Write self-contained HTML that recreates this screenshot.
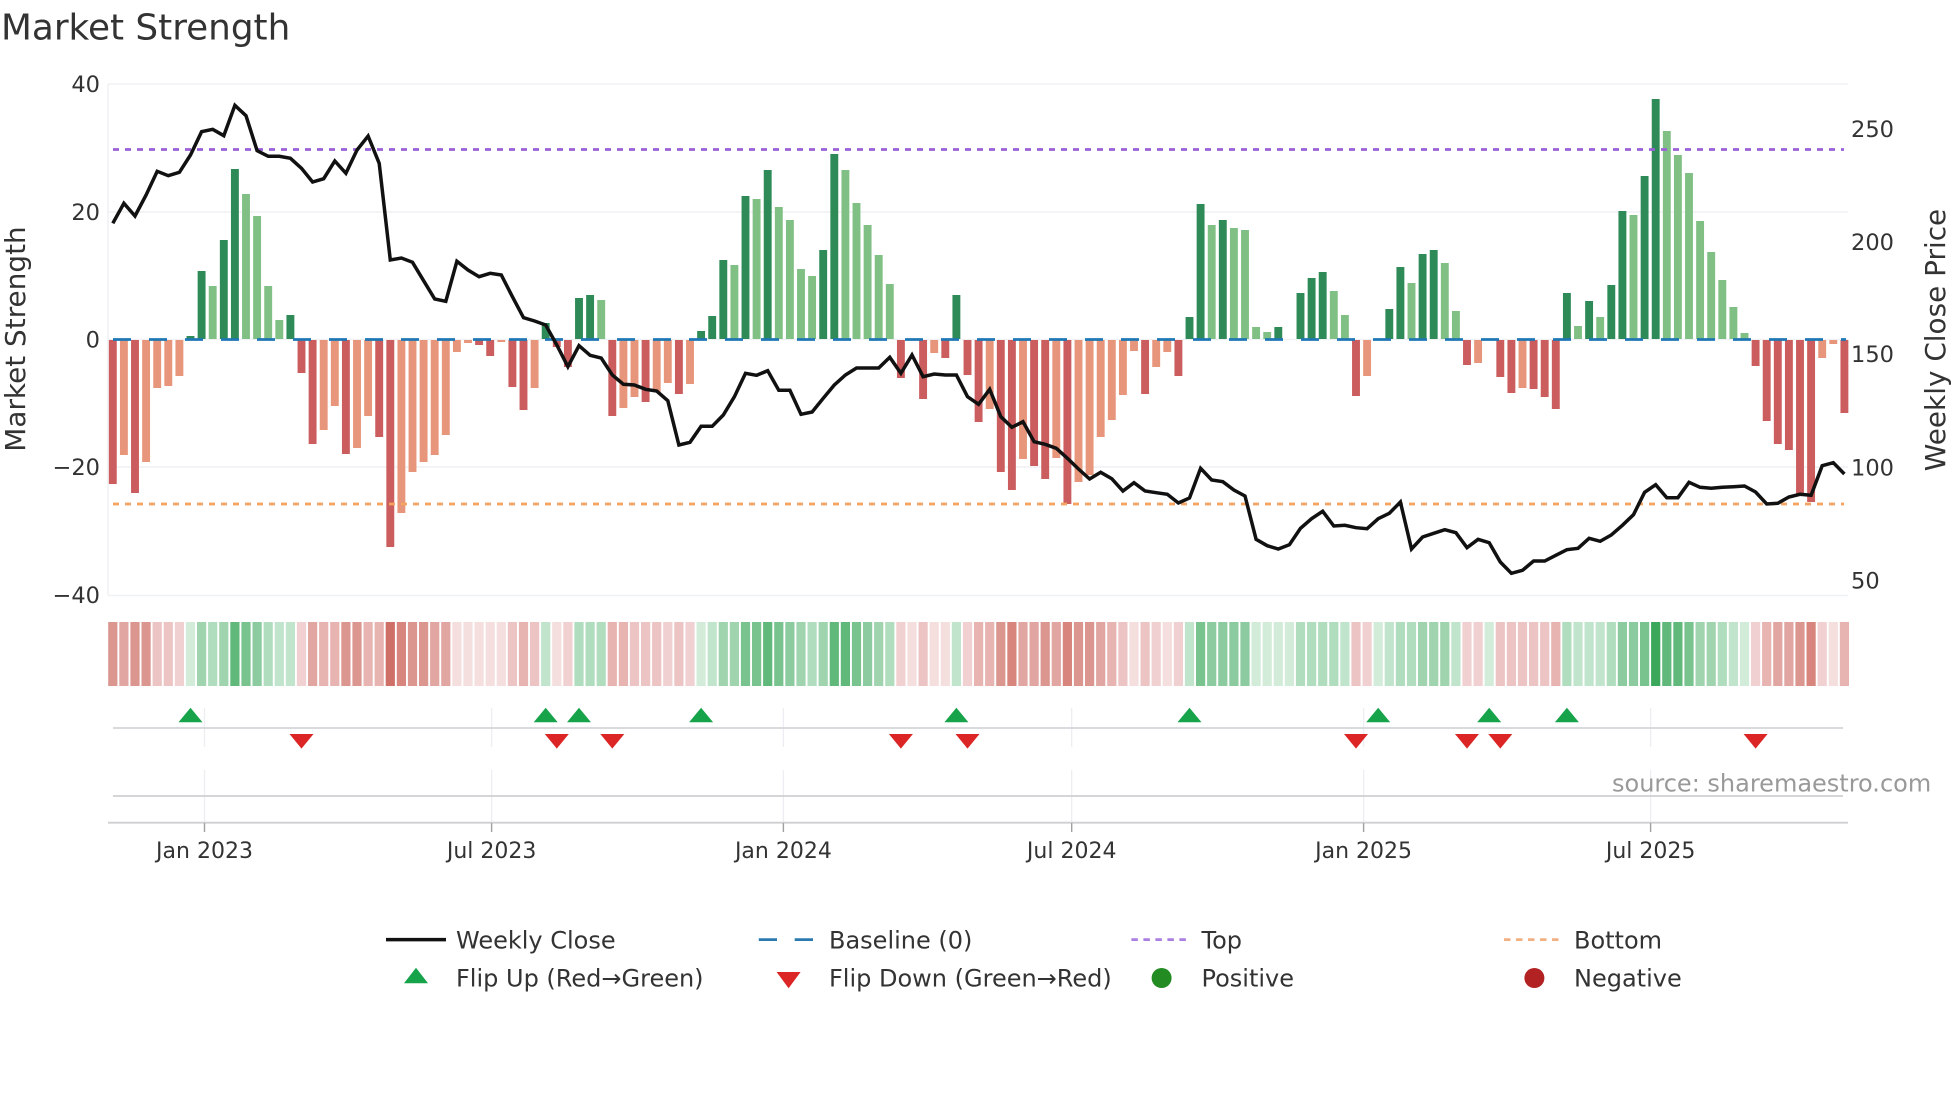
<!DOCTYPE html>
<html lang="en"><head><meta charset="utf-8"><title>Market Strength</title>
<style>
html,body{margin:0;padding:0;background:#fff;width:1960px;height:1102px;overflow:hidden}
svg{display:block}
text{font-family:"DejaVu Sans","Liberation Sans",sans-serif;fill:#333}
.t{font-size:22.5px}
.x{font-size:22px;text-anchor:middle}
.a{font-size:27.9px;text-anchor:middle}
.l{font-size:24px}
path{fill:none}
</style></head><body>
<svg width="1960" height="1102" viewBox="0 0 1960 1102" xmlns="http://www.w3.org/2000/svg">
<rect width="1960" height="1102" fill="#fff"/>
<text x="1" y="39.5" style="font-size:35.8px">Market Strength</text>
<!-- grid -->
<path stroke="#f0f1f4" stroke-width="1.6" d="M108 84H1848M108 212H1848M108 339.5H1848M108 467H1848M108 595.5H1848M108 84V595"/>
<!-- bars -->
<g stroke-width="7.9">
<path stroke="#2e8b57" d="M190.5 339v-3M201.6 339v-68M223.8 339v-99M234.9 339v-170M290.4 339v-24M545.7 339v-16M579 339v-41M590.1 339v-44M701.1 339v-8M712.2 339v-23M723.3 339v-79M745.5 339v-143M767.7 339v-169M823.2 339v-89M834.3 339v-185M956.4 339v-44M1189.5 339v-22M1200.6 339v-135M1222.8 339v-119M1278.3 339v-12M1300.5 339v-46M1311.6 339v-61M1322.7 339v-67M1389.3 339v-30M1400.4 339v-72M1422.6 339v-85M1433.7 339v-89M1566.9 339v-46M1589.1 339v-38M1611.3 339v-54M1622.4 339v-128M1644.6 339v-163M1655.7 339v-240"/>
<path stroke="#81c084" d="M212.7 339v-53M246 339v-145M257.1 339v-123M268.2 339v-53M279.3 339v-19M601.2 339v-39M734.4 339v-74M756.6 339v-140M778.8 339v-132M789.9 339v-119M801 339v-70M812.1 339v-63M845.4 339v-169M856.5 339v-136M867.6 339v-114M878.7 339v-84M889.8 339v-55M1211.7 339v-114M1233.9 339v-111M1245 339v-109M1256.1 339v-12M1267.2 339v-7M1333.8 339v-48M1344.9 339v-24M1411.5 339v-56M1444.8 339v-76M1455.9 339v-28M1578 339v-13M1600.2 339v-22M1633.5 339v-124M1666.8 339v-208M1677.9 339v-184M1689 339v-166M1700.1 339v-118M1711.2 339v-87M1722.3 339v-59M1733.4 339v-32M1744.5 339v-6"/>
<path stroke="#cb5d5e" d="M112.8 340v144M135 340v153M301.5 340v33M312.6 340v104M345.9 340v114M379.2 340v97M390.3 340v207M479.1 340v5M490.2 340v16M512.4 340v47M523.5 340v70M556.8 340v7M567.9 340v27M612.3 340v76M645.6 340v62M678.9 340v54M900.9 340v38M923.1 340v59M945.3 340v18M967.5 340v35M978.6 340v82M1000.8 340v132M1011.9 340v150M1034.1 340v126M1045.2 340v139M1067.4 340v164M1145.1 340v54M1178.4 340v36M1356 340v56M1467 340v25M1500.3 340v37M1511.4 340v53M1533.6 340v49M1544.7 340v57M1555.8 340v69M1755.6 340v26M1766.7 340v81M1777.8 340v104M1788.9 340v110M1800 340v156M1811.1 340v162M1844.4 340v73"/>
<path stroke="#e8967b" d="M123.9 340v115M146.1 340v122M157.2 340v48M168.3 340v46M179.4 340v36M323.7 340v90M334.8 340v66M357 340v108M368.1 340v76M401.4 340v173M412.5 340v132M423.6 340v122M434.7 340v115M445.8 340v95M456.9 340v12M468 340v3M501.3 340v2M534.6 340v48M623.4 340v68M634.5 340v57M656.7 340v52M667.8 340v43M690 340v44M934.2 340v13M989.7 340v69M1023 340v119M1056.3 340v118M1078.5 340v142M1089.6 340v135M1100.7 340v97M1111.8 340v80M1122.9 340v55M1134 340v11M1156.2 340v27M1167.3 340v12M1367.1 340v36M1478.1 340v23M1522.5 340v48M1822.2 340v18M1833.3 340v4"/>
</g>
<!-- reference lines -->
<path stroke="#1f77b4" stroke-width="2.8" stroke-dasharray="18 18" d="M113 339.5H1846"/>
<path stroke="#9b60d8" stroke-width="2.7" stroke-dasharray="6 6" d="M113 149.5H1844"/>
<path stroke="#f4a460" stroke-width="2.7" stroke-dasharray="6 6" d="M113 504H1844"/>
<!-- price -->
<path stroke="#111" stroke-width="3.5" stroke-linejoin="miter" stroke-miterlimit="3" d="M112.8 223.3L123.9 203.3 135 216 146.1 195 157.2 171.3 168.3 175.7 179.4 172.3 190.5 155 201.6 131.7 212.7 129.3 223.8 135.7 234.9 105.3 246 115.7 257.1 150.7 268.2 156.3 279.3 156.3 290.4 158.3 301.5 168.3 312.6 182 323.7 178.7 334.8 161 345.9 173.3 357 150 368.1 136 379.2 163.3 390.3 260 401.4 258 412.5 262.3 423.6 280.7 434.7 299 445.8 301.3 456.9 261.3 468 270 479.1 276.7 490.2 273.3 501.3 275 512.4 296.7 523.5 317.7 534.6 321 545.7 325 556.8 345 567.9 366.7 579 345.7 590.1 355.3 601.2 358 612.3 375 623.4 384.3 634.5 385 645.6 389.3 656.7 391 667.8 400.7 678.9 445 690 442.3 701.1 426.3 712.2 426.3 723.3 415 734.4 396.7 745.5 373.3 756.6 375.3 767.7 370.7 778.8 390.3 789.9 390.3 801 414.3 812.1 412 823.2 398.3 834.3 385 845.4 375 856.5 368 867.6 368 878.7 368 889.8 357.3 900.9 373.3 912 355 923.1 376.7 934.2 374 945.3 375 956.4 375 967.5 396.7 978.6 404.3 989.7 389.3 1000.8 416.7 1011.9 427.3 1023 421.7 1034.1 441.7 1045.2 444.3 1056.3 448.3 1067.4 458.3 1078.5 469 1089.6 479 1100.7 472.3 1111.8 478.7 1122.9 491 1134 482.7 1145.1 491 1156.2 492.7 1167.3 494.3 1178.4 503 1189.5 498 1200.6 468.3 1211.7 480 1222.8 481.7 1233.9 490 1245 496 1256.1 539.3 1267.2 545.7 1278.3 549 1289.4 544.7 1300.5 528.3 1311.6 518.7 1322.7 511.3 1333.8 526 1344.9 525.3 1356 527.7 1367.1 528.7 1378.2 518.7 1389.3 513.3 1400.4 502 1411.5 549 1422.6 537 1433.7 533.3 1444.8 529.7 1455.9 532.7 1467 547.7 1478.1 539.3 1489.2 542.7 1500.3 562 1511.4 573.3 1522.5 570.3 1533.6 561 1544.7 561 1555.8 555.3 1566.9 549.7 1578 548.3 1589.1 538.3 1600.2 541.3 1611.3 535 1622.4 525.3 1633.5 514.7 1644.6 492.3 1655.7 484.7 1666.8 497.7 1677.9 497.7 1689 482.3 1700.1 487.3 1711.2 488.3 1722.3 487.3 1733.4 486.7 1744.5 486 1755.6 492 1766.7 504 1777.8 503.3 1788.9 497 1800 494.3 1811.1 495.3 1822.2 465.7 1833.3 462.7 1844.4 474"/>
<!-- heat strip -->
<g stroke-width="9.2">
<path stroke="#f5dede" d="M456.9 622v64M468 622v64M479.1 622v64M490.2 622v64M501.3 622v64M556.8 622v64M912 622v64M934.2 622v64M945.3 622v64M1134 622v64M1167.3 622v64M1833.3 622v64"/>
<path stroke="#f0d0d0" d="M179.4 622v64M301.5 622v64M567.9 622v64M667.8 622v64M690 622v64M900.9 622v64M967.5 622v64M1156.2 622v64M1178.4 622v64M1367.1 622v64M1467 622v64M1478.1 622v64M1755.6 622v64M1822.2 622v64"/>
<path stroke="#ecc4c4" d="M157.2 622v64M168.3 622v64M512.4 622v64M534.6 622v64M634.5 622v64M645.6 622v64M656.7 622v64M678.9 622v64M923.1 622v64M1122.9 622v64M1145.1 622v64M1356 622v64M1500.3 622v64M1511.4 622v64M1522.5 622v64M1533.6 622v64M1544.7 622v64"/>
<path stroke="#e7b4b1" d="M323.7 622v64M334.8 622v64M368.1 622v64M379.2 622v64M523.5 622v64M612.3 622v64M623.4 622v64M978.6 622v64M989.7 622v64M1111.8 622v64M1555.8 622v64M1766.7 622v64M1844.4 622v64"/>
<path stroke="#e2a6a2" d="M123.9 622v64M312.6 622v64M434.7 622v64M445.8 622v64M1023 622v64M1034.1 622v64M1056.3 622v64M1100.7 622v64M1777.8 622v64M1788.9 622v64"/>
<path stroke="#db9690" d="M112.8 622v64M135 622v64M146.1 622v64M345.9 622v64M357 622v64M412.5 622v64M423.6 622v64M1000.8 622v64M1045.2 622v64M1078.5 622v64M1089.6 622v64M1800 622v64"/>
<path stroke="#d7857d" d="M401.4 622v64M1011.9 622v64M1067.4 622v64M1811.1 622v64"/>
<path stroke="#cf7068" d="M390.3 622v64"/>
<path stroke="#d3ecda" d="M190.5 622v64M701.1 622v64M1256.1 622v64M1267.2 622v64M1278.3 622v64M1289.4 622v64M1378.2 622v64M1489.2 622v64M1744.5 622v64"/>
<path stroke="#c1e4cc" d="M279.3 622v64M290.4 622v64M545.7 622v64M712.2 622v64M956.4 622v64M1189.5 622v64M1344.9 622v64M1389.3 622v64M1455.9 622v64M1578 622v64M1589.1 622v64M1600.2 622v64M1733.4 622v64"/>
<path stroke="#b1ddbf" d="M212.7 622v64M268.2 622v64M579 622v64M590.1 622v64M601.2 622v64M812.1 622v64M889.8 622v64M1300.5 622v64M1311.6 622v64M1322.7 622v64M1333.8 622v64M1400.4 622v64M1411.5 622v64M1566.9 622v64M1611.3 622v64M1722.3 622v64"/>
<path stroke="#9fd4af" d="M201.6 622v64M223.8 622v64M723.3 622v64M734.4 622v64M801 622v64M823.2 622v64M878.7 622v64M1422.6 622v64M1433.7 622v64M1444.8 622v64M1700.1 622v64M1711.2 622v64"/>
<path stroke="#8bcb9f" d="M257.1 622v64M789.9 622v64M867.6 622v64M1211.7 622v64M1222.8 622v64M1233.9 622v64M1245 622v64M1622.4 622v64M1633.5 622v64"/>
<path stroke="#78c38e" d="M246 622v64M745.5 622v64M756.6 622v64M778.8 622v64M856.5 622v64M1200.6 622v64M1644.6 622v64M1689 622v64"/>
<path stroke="#61b87b" d="M234.9 622v64M767.7 622v64M834.3 622v64M845.4 622v64M1666.8 622v64M1677.9 622v64"/>
<path stroke="#3aa75a" d="M1655.7 622v64"/>
</g>
<!-- lower panels grid -->
<path stroke="#eceef1" stroke-width="1.3" d="M204.5 708V747M491.6 708V747M783.4 708V747M1071.7 708V747M1363.6 708V747M1650.6 708V747M204.5 770V822M491.6 770V822M783.4 770V822M1071.7 770V822M1363.6 770V822M1650.6 770V822"/>
<path stroke="#d3d5da" stroke-width="1.8" d="M113 728H1843"/>
<path stroke="#cfcfd2" stroke-width="1.8" d="M113 796H1843M108 822.7H1848"/>
<path stroke="#a0a0a0" stroke-width="1.4" d="M204.5 823V832M491.6 823V832M783.4 823V832M1071.7 823V832M1363.6 823V832M1650.6 823V832"/>
<!-- flip markers -->
<g fill="#16a34a" stroke="none">
<polygon points="190.5,707.8 202.5,722.3 178.5,722.3"/><polygon points="545.7,707.8 557.7,722.3 533.7,722.3"/><polygon points="579,707.8 591,722.3 567,722.3"/><polygon points="701.1,707.8 713.1,722.3 689.1,722.3"/><polygon points="956.4,707.8 968.4,722.3 944.4,722.3"/><polygon points="1189.5,707.8 1201.5,722.3 1177.5,722.3"/><polygon points="1378.2,707.8 1390.2,722.3 1366.2,722.3"/><polygon points="1489.2,707.8 1501.2,722.3 1477.2,722.3"/><polygon points="1566.9,707.8 1578.9,722.3 1554.9,722.3"/>
</g>
<g fill="#dc2626" stroke="none">
<polygon points="301.5,748.6 289.5,734 313.5,734"/><polygon points="556.8,748.6 544.8,734 568.8,734"/><polygon points="612.3,748.6 600.3,734 624.3,734"/><polygon points="900.9,748.6 888.9,734 912.9,734"/><polygon points="967.5,748.6 955.5,734 979.5,734"/><polygon points="1356,748.6 1344,734 1368,734"/><polygon points="1467,748.6 1455,734 1479,734"/><polygon points="1500.3,748.6 1488.3,734 1512.3,734"/><polygon points="1755.6,748.6 1743.6,734 1767.6,734"/>
</g>
<!-- axis labels -->
<g class="t" text-anchor="end">
<text class="t" x="100" y="92">40</text>
<text class="t" x="100" y="220">20</text>
<text class="t" x="100" y="347.5">0</text>
<text class="t" x="100" y="475">−20</text>
<text class="t" x="100" y="603">−40</text>
</g>
<text class="t" x="1851" y="137">250</text>
<text class="t" x="1851" y="250">200</text>
<text class="t" x="1851" y="362">150</text>
<text class="t" x="1851" y="475.5">100</text>
<text class="t" x="1851" y="588.5">50</text>
<text class="a" transform="translate(25 339) rotate(-90)">Market Strength</text>
<text class="a" transform="translate(1945 340) rotate(-90)">Weekly Close Price</text>
<text class="x" x="204.5" y="858">Jan 2023</text>
<text class="x" x="491.6" y="858">Jul 2023</text>
<text class="x" x="783.4" y="858">Jan 2024</text>
<text class="x" x="1071.7" y="858">Jul 2024</text>
<text class="x" x="1363.6" y="858">Jan 2025</text>
<text class="x" x="1650.6" y="858">Jul 2025</text>
<text x="1612" y="791.5" style="font-size:24px;fill:#999">source: sharemaestro.com</text>
<!-- legend -->
<path stroke="#111" stroke-width="3.5" d="M386 939.6H446"/>
<path stroke="#2a7ab0" stroke-width="2.8" d="M758.8 939.6H777M794.7 939.6H813"/>
<path stroke="#ab7fe2" stroke-width="2.8" stroke-dasharray="6.5 5.5" d="M1131.4 939.6H1186"/>
<path stroke="#f2b080" stroke-width="2.8" stroke-dasharray="6.5 5.5" d="M1504 939.6H1559"/>
<polygon fill="#16a34a" points="416,967.7 428,983.3 404,983.3"/>
<polygon fill="#dc2626" points="788.6,988.3 776.6,972 800.6,972"/>
<circle cx="1161.6" cy="978" r="10" fill="#228b22"/>
<circle cx="1534.4" cy="978" r="10" fill="#b22222"/>
<text class="l" x="456" y="948.3">Weekly Close</text>
<text class="l" x="829" y="948.3">Baseline (0)</text>
<text class="l" x="1201.5" y="948.3">Top</text>
<text class="l" x="1574" y="948.3">Bottom</text>
<text class="l" x="456" y="986.5">Flip Up (Red→Green)</text>
<text class="l" x="829" y="986.5">Flip Down (Green→Red)</text>
<text class="l" x="1201.5" y="986.5">Positive</text>
<text class="l" x="1574" y="986.5">Negative</text>
</svg>
</body></html>
